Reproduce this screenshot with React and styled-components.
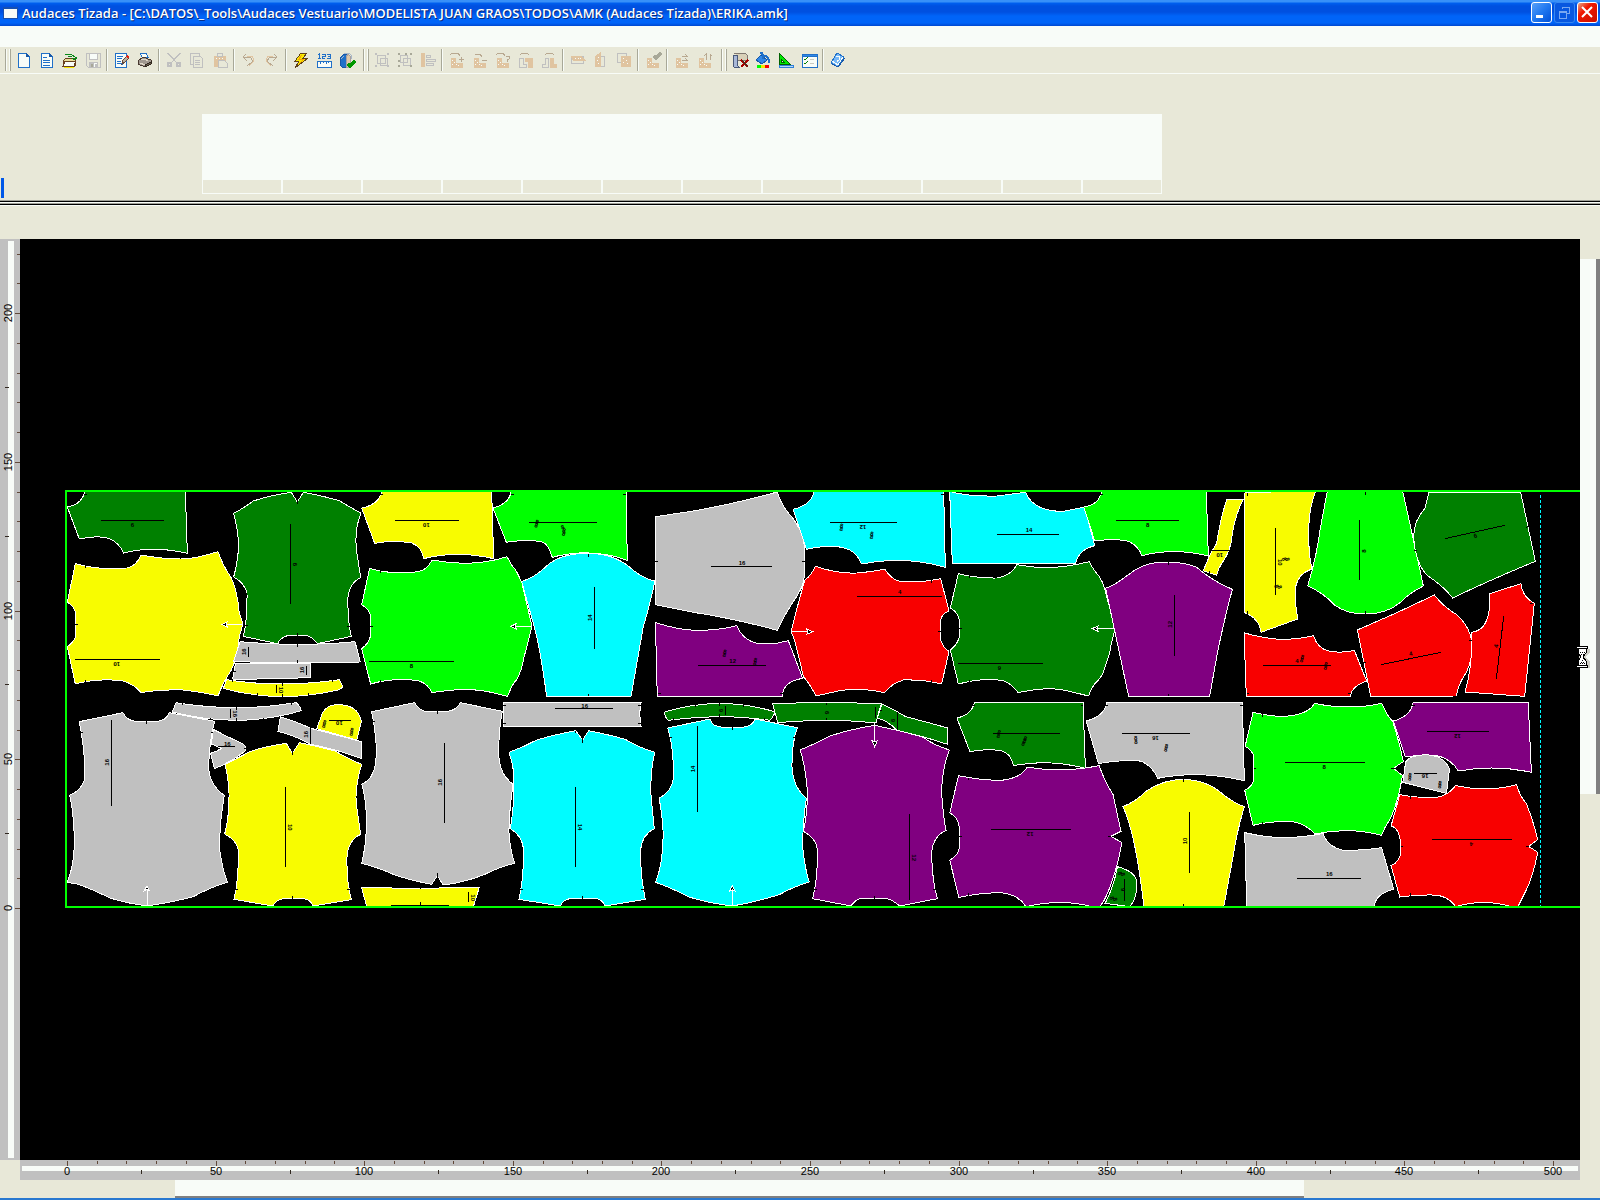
import React from 'react';
import styled, { createGlobalStyle, ThemeProvider } from 'styled-components';

const theme = {
  colors: {
    face: '#e8e8d8',
    paper: '#f8fcf8',
    shade: '#808080',
    ruler: '#c0c0c0',
    table: '#000',
    border: '#00ff00',
    accent: '#0058e8'
  }
};

const Y = '#f8fc00';
const DG = '#008000';
const LG = '#00ff00';
const GR = '#c0c0c0';
const CY = '#00fcff';
const PU = '#800080';
const RE = '#f80000';

const BLUE = '#2070c8';
const OFF = '#c0c0c0';
const TAN = '#e0c4a0';
const TANDARK = '#b8a890';
const WHITE = '#f8fcf8';

// every icon is a list of [path, fill, stroke, stroke width] on a 16 x 16 grid
const LSHAPE = 'M2 6h4v5h7v4H2z';
const DOTS = 'M3 8.500h1M5 10.500h1M3 12.500h1M7 12.500h1M9 13.500h1';
const icons = {
  new: [['M2 1h8l3 3v11H2z', WHITE, BLUE], ['M10 1v3h3', '#1858a8', '#1858a8']],
  model: [
    ['M2 1h8l3 3v11H2z', WHITE, BLUE],
    ['M10 1v3h3', '#1858a8', '#1858a8'],
    ['M4 5h4M4 8h7M4 10h7M4 13h7', 'none', BLUE]
  ],
  open: [
    ['M1 14V9l3-3h9l1 2-1 6z', '#e8dc98', '#684020'],
    ['M3 9h11l-2 5H1z', WHITE, '#684020'],
    ['M2 15h10', 'none', '#f8e800'],
    ['M3 2h6l4 3v3M10 6l3 2 2-3M6 4h4', 'none', '#088818']
  ],
  save: [
    ['M1 1h14v14H3l-2-2z', 'none', OFF],
    ['M4 1h8v6H4zM4 10h8v5H4z', WHITE, OFF],
    ['M5 11h3v4H5zM10 12h1v2h-1z', '#a8a898', OFF]
  ],
  edit: [
    ['M1 1h11v14H1z', WHITE, BLUE],
    ['M3 4h6M3 6h3l2 1M3 9h4M3 12l4-1 2 2', 'none', BLUE],
    ['M8 12l1-4 4-4 2 2-4 4z', '#b8b0a0', '#684838'],
    ['M13 4l2 2', 'none', '#e82010', 2]
  ],
  print: [
    ['M3 1h6l2 4H5z', WHITE, BLUE],
    ['M1 9l5-4 8 3v4l-6 3-7-3z', '#a09890', '#483830'],
    ['M4 8l4-1 3 2M3 11l5 2 4-2', 'none', '#e0d8c8'],
    ['M8 13l6-3v2l-6 3z', '#685848', '#302820']
  ],
  cut: [
    ['M1 1l10 10M15 1L5 11M2 1l8 9M14 1L6 10', 'none', OFF],
    ['M2 11h3v3H2zM11 11h3v3h-3z', 'none', OFF, 2]
  ],
  copy: [['M1 1h9v11H1z', 'none', OFF], ['M4 4h7l2 2v9H4z', '#e8e8d8', OFF], ['M6 8h5M6 10h5M6 12h5', 'none', OFF]],
  paste: [
    ['M2 4h11v10H2z', TAN, TAN],
    ['M5 1h5v3H5z', '#e8e8d8', OFF],
    ['M6 8h6l3 3v4H6z', '#e8e8d8', OFF],
    ['M4 6h1M7 6h1M10 6h1', 'none', WHITE]
  ],
  undo: [['M5 2L2 5l4 4M2 5h6q4 1 3 5l-5 4', 'none', TANDARK], ['M6 4h3q5 1 3 6l-4 4', 'none', TAN]],
  redo: [['M10 2l3 3-4 4M13 5H7q-4 1-3 5l5 4', 'none', TANDARK], ['M9 4H6q-5 1-3 6l4 4', 'none', TAN]],
  flash: [['M8 1h6l-4 5h5L2 16l4-7H2z', '#f8e800', '#604018'], ['M9 3L6 7h5l-5 5', 'none', '#f8a000']],
  measure: [
    ['M1 9h14v6H1z', WHITE, BLUE],
    ['M4 9v3M7 9v2M10 9v3M12 9v2', 'none', BLUE],
    ['M3 1v5M2 2h1M2 6h3M6 2h3v2H6v2h3M11 2h3v4h-3M12 4h2', 'none', BLUE]
  ],
  check: [
    ['M1 6l4-4h3v13H3l-2-2z', BLUE, '#1858a8'],
    ['M7 5l2-3 2 2v11H7z', '#e0c8a8', '#a8a0a0'],
    ['M2 7l3-3M5 1h5l2 2v4', 'none', '#a8b8c8'],
    ['M9 12l2 2 5-5', 'none', '#009800', 3]
  ],
  group: [
    ['M3 3h8v8H3zM6 6h7v7H6z', 'none', OFF],
    ['M1 1h2v2H1zM13 1h2v2h-2zM1 13h2v2H1zM13 13h2v2h-2z', OFF, 'none']
  ],
  ungroup: [
    ['M3 3h7v7H3zM6 6h7v7H6z', 'none', OFF],
    ['M1 1h2v2H1zM8 1h2v2H8zM13 1h2v2h-2zM1 13h2v2H1zM13 13h2v2h-2zM1 8h2v2H1z', '#a8a898', 'none']
  ],
  align: [['M1 1h4v14H1z', TAN, 'none'], ['M6 3h4v2H6zM6 7h9v2H6zM6 11h7v2H6z', 'none', OFF]],
  addPiece: [['M1 3l2-2h6l2 3M10 7h5M12 5v5', 'none', TANDARK], [LSHAPE, TAN, TAN], [DOTS, 'none', WHITE]],
  subPiece: [['M3 2h5l2 3M10 8h5', 'none', TANDARK], [LSHAPE, TAN, TAN], [DOTS, 'none', WHITE]],
  askPiece: [['M1 3l2-2h5l2 3M11 4h3v3l-2 1v2', 'none', TANDARK], [LSHAPE, TAN, TAN], [DOTS, 'none', WHITE]],
  flipLeft: [['M2 3l2-2h5l2 2', 'none', TANDARK], ['M1 6h4v6h3v3H1z', 'none', OFF], ['M7 6h7v9h-4V9H7z', TAN, TAN]],
  flipRight: [['M4 3l2-2h5l2 2', 'none', TANDARK], ['M4 6h3v9H1v-3h3z', 'none', OFF], ['M9 6h3v6h3v3H9z', TAN, TAN]],
  mirrorH: [['M1 4h12v7H1z', 'none', OFF], ['M1 4h10l4 4H3z', TAN, TAN], ['M5 6.500h1M8 6.500h1M10 6.500h1', 'none', WHITE]],
  mirrorV: [['M6 4h5v10H6z', 'none', OFF], ['M2 5l5-4v13H2z', TAN, TAN], ['M5 5.500h1M4 8.500h1M5 11.500h1', 'none', WHITE]],
  stack: [['M1 1h9v9H1z', 'none', OFF], ['M5 4h9v10H5z', TAN, TAN], ['M7 6.500h1M10 8.500h1M7 10.500h1M11 11.500h1', 'none', WHITE]],
  accept: [[LSHAPE, TAN, TAN], [DOTS, 'none', WHITE], ['M9 4l2 2 5-5', 'none', '#a8a898', 3]],
  moveH: [[LSHAPE, TAN, TAN], [DOTS, 'none', WHITE], ['M8 4h5l-2-2M8 8h5l-2-2', 'none', TANDARK]],
  moveV: [[LSHAPE, TAN, TAN], [DOTS, 'none', WHITE], ['M9 8V2L7 4M13 8V2l2 2', 'none', TANDARK]],
  discard: [
    ['M2 1h11l2 2v5H5V3', '#d8d0b8', '#807870'],
    ['M1 3h4v10l2 2H2l-1-2z', '#a8b8d8', '#485878'],
    ['M9 8l7 7M16 8l-7 7', 'none', '#a80000', 2],
    ['M10 8l6 7', 'none', '#483020']
  ],
  paint: [
    ['M1 8l5-5 6 5-5 4z', '#3088e8', '#1858a8'],
    ['M5 1q3-2 3 6M9 4q5 0 5 7', 'none', BLUE, 2],
    ['M2 13h4v3H2z', LG, 'none'],
    ['M6 13h4v3H6z', '#f8e800', 'none'],
    ['M10 13h4v3h-4z', RE, 'none']
  ],
  square: [
    ['M1 1l11 11H1z', '#00e800', '#006000'],
    ['M3 7l3 3H3z', '#e8e8d8', '#006000'],
    ['M1 13h14v2H1z', '#b8d8f8', '#3080d8']
  ],
  options: [
    ['M1 2h15v13H1z', WHITE, BLUE],
    ['M1 2h15v2H1z', '#3088e8', BLUE],
    ['M3 7l1 1 3-3M3 11l1 1 3-3', 'none', '#008000'],
    ['M9 7h4M9 11h4', 'none', '#c8c8c0']
  ],
  help: [
    ['M7 1l7 4-6 10-7-4z', '#78b8f8', BLUE],
    ['M2 9l6 4 5-8', 'none', WHITE],
    ['M6 4l4 1-1 3H7v2', 'none', WHITE],
    ['M2 12l6 3 7-9', 'none', '#1858a8']
  ]
};

// [icon, label, disabled]; '|' is a separator and '||' a toolbar grip
const toolbar = [
  '||',
  ['new', 'Nuevo'],
  ['model', 'Nuevo modelo'],
  ['open', 'Abrir'],
  ['save', 'Guardar', true],
  '|',
  ['edit', 'Propiedades'],
  ['print', 'Imprimir'],
  '|',
  ['cut', 'Cortar', true],
  ['copy', 'Copiar', true],
  ['paste', 'Pegar', true],
  '|',
  ['undo', 'Deshacer', true],
  ['redo', 'Rehacer', true],
  '|',
  ['flash', 'Encaje'],
  ['measure', 'Medidas'],
  ['check', 'Verificar'],
  '||',
  ['group', 'Agrupar', true],
  ['ungroup', 'Desagrupar', true],
  ['align', 'Alinear', true],
  '|',
  ['addPiece', 'Agregar pieza', true],
  ['subPiece', 'Quitar pieza', true],
  ['askPiece', 'Consultar pieza', true],
  ['flipLeft', 'Voltear a la izquierda', true],
  ['flipRight', 'Voltear a la derecha', true],
  '|',
  ['mirrorH', 'Espejo horizontal', true],
  ['mirrorV', 'Espejo vertical', true],
  ['stack', 'Apilar', true],
  '|',
  ['accept', 'Aceptar', true],
  '|',
  ['moveH', 'Mover horizontal', true],
  ['moveV', 'Mover vertical', true],
  '||',
  ['discard', 'Retirar tela'],
  ['paint', 'Colores'],
  ['square', 'Escuadra'],
  ['options', 'Opciones'],
  '|',
  ['help', 'Ayuda']
];

/*
 * Marker pieces, grouped by zone of the table. A zone has its own origin and
 * unit; pieces are [fill, outline], labels are [x, y, size, rotation].
 */
const zones = [
  {
    x: 50, y: 480, sx: 1 / 3,
    pieces: [
      [DG, 'M104 33Q98 72 52 81L88 177Q140 165 175 175Q205 185 221 219Q310 196 412 220L406 33Z'],
      [Y, 'M76 251L52 366Q74 380 77 400L77 470Q70 487 52 500L76 612Q140 594 215 602Q250 610 273 638Q330 628 400 630Q460 637 504 648Q520 605 543 572Q562 535 568 470L579 432L568 400Q562 330 543 292Q520 260 504 215Q430 238 390 237Q330 236 273 225Q260 258 230 264Q150 272 76 251Z'],
      [DG, 'M551 100Q585 82 610 63Q660 46 724 37L742 66L760 37Q830 50 870 63Q900 82 933 99Q912 150 920 215L932 292Q898 310 894 350Q892 420 904 469L802 491Q785 467 762 466L720 466Q695 468 682 491L580 469Q592 420 591 340Q585 310 551 291Q565 240 566 190Q562 140 551 100Z'],
      [GR, 'M570 485Q660 493 742 493Q840 493 915 485L931 546Q840 547 742 548Q640 547 550 545Z'],
      [GR, 'M556 552Q680 552 781 549L781 593Q660 597 548 598Z'],
      [Y, 'M530 599Q610 612 697 612Q790 611 868 599L878 620Q872 627 868 629Q780 650 697 650Q600 648 520 625Z']
    ],
    lines: 'M153 121H341M75 538H329M721 132V371M595 502V530M769 558V584M679 615V640M103 43H112M75 433H84M106 259V265M106 601V608M742 60V72M742 458V470M742 492V501M742 540V549M585 437H593M892 438H900M548 574H558M697 608V618M622 640V648M697 642V650M775 640V648M548 598V605M848 598V605',
    arrows: 'M579 433H530M516 433L532 425L528 433L532 441Z',
    labels: [[247, 135, '6', 0], [200, 552, '10', 180], [735, 253, '6', 90], [582, 515, '16', -90], [757, 570, '16', -90], [693, 630, '10', 90]]
  },
  {
    x: 350, y: 480, sx: 1 / 3,
    pieces: [
      [Y, 'M96 33Q87 74 35 84L74 190Q130 179 185 189Q215 200 221 236Q320 210 431 236L425 33Z'],
      [LG, 'M484 33Q478 72 429 84L469 187Q540 176 580 187Q596 196 607 232Q640 222 700 218Q780 220 832 241L828 33Z'],
      [LG, 'M59 265L35 374Q56 386 61 405L61 470Q56 490 35 506L62 612Q130 592 205 602Q235 612 246 638Q340 622 410 634L473 649Q485 615 500 599Q516 570 520 540L546 439Q530 370 516 310Q500 270 488 260L471 230Q410 250 340 250Q290 248 246 240Q232 270 205 275Q130 286 59 265Z'],
      [CY, 'M515 305Q555 290 580 267Q620 225 690 221L735 221Q800 225 850 271Q885 298 915 303Q898 380 880 440L843 649L590 649Q570 500 550 430Z']
    ],
    lines: 'M135 121H326M57 544H311M537 127H741M733 321V506M90 43H100M482 43H491M820 43H829M60 439H69M92 270V278M92 600V608M715 221V231M715 641V649',
    arrows: 'M546 439H497M482 439L499 431L495 439L499 447Z',
    labels: [[229, 135, '10', 180], [184, 558, '8', 0], [561, 126, '8', 20], [559, 136, '8', 20], [638, 142, '8', -20], [642, 151, '8', 20], [641, 161, '8', 20], [720, 413, '14', -90]]
  },
  {
    x: 650, y: 480, sx: 1 / 3,
    pieces: [
      [GR, 'M17 110L130 93Q250 72 382 36Q395 80 425 110Q463 160 463 200L463 290Q460 325 425 372Q400 410 382 451Q250 415 130 397L17 374Z'],
      [PU, 'M17 428Q90 452 150 451Q210 450 261 437Q275 478 320 490L380 490L415 482L458 595Q398 605 397 649L22 649Q18 540 17 428Z'],
      [CY, 'M493 33Q485 75 429 88L469 208Q540 193 580 203Q620 212 634 252Q760 226 886 262L881 33Z'],
      [CY, 'M899 33L905 36Q960 50 1040 48L1127 37Q1150 95 1240 94L1304 81L1334 197Q1285 210 1277 250L907 250Z'],
      [RE, 'M496 258Q560 282 620 279Q670 275 704 267Q725 300 750 304Q800 310 872 296L897 392Q873 405 872 420L872 480Q880 505 897 514L875 612Q820 598 760 600Q725 610 704 638Q630 622 570 632L498 648Q480 612 460 590Q440 500 430 470L423 455L432 420Q455 330 465 300Q485 285 496 258Z'],
      [DG, 'M925 281L901 384Q925 398 928 420L928 470Q922 495 901 510L925 612Q1000 592 1060 602Q1090 615 1104 638Q1200 618 1250 632L1316 648Q1325 620 1340 605Q1358 590 1365 560Q1380 520 1382 500L1395 446Q1385 400 1370 350Q1360 300 1340 280Q1325 262 1318 245Q1200 275 1101 254Q1080 290 1040 294Q980 295 925 281Z']
    ],
    lines: 'M183 259H365M144 556H347M540 127H741M1041 163H1228M621 349H875M925 550H1179M16 244H25M456 244H465M24 640H32M390 640H398M874 43H882M864 454H873M928 445H937M844 300V308M844 600V608M958 286V294M958 600V608',
    arrows: 'M423 455H472M488 455L470 447L474 455L470 463ZM1395 446H1342M1326 446L1344 438L1340 446L1344 454Z',
    labels: [[276, 250, '16', 0], [248, 543, '12', 0], [225, 515, '8', 15], [223, 525, '8', 15], [316, 540, '8', 15], [315, 550, '8', 15], [639, 141, '12', 180], [575, 137, '8', 15], [574, 147, '8', 15], [666, 161, '8', 15], [665, 171, '8', 15], [1137, 150, '14', 0], [749, 337, '4', 0], [1048, 563, '6', 180]]
  },
  {
    x: 1090, y: 480, sx: 1 / 3,
    pieces: [
      [LG, 'M35 33Q28 75 -19 81L14 182Q90 175 118 185Q145 198 156 227Q250 202 355 228L349 33Z'],
      [PU, 'M47 325Q80 312 110 288Q160 246 215 247Q280 244 320 262Q370 305 427 328Q400 430 382 520L359 649L116 649Z'],
      [Y, 'M411 58L460 58Q432 110 423 190Q412 230 395 250Q385 265 380 286L340 272Q360 220 380 190Q392 110 411 58Z'],
      [Y, 'M464 40L470 33L676 36Q655 90 656 160Q656 230 666 267Q625 280 617 320Q614 370 623 417Q560 440 513 457Q508 415 464 398Z'],
      [LG, 'M712 33L938 33Q975 200 1000 318Q960 338 930 368Q890 402 826 402Q770 402 735 376Q700 338 653 318Q680 230 690 150Z'],
      [DG, 'M1017 37L1292 37L1336 244Q1200 300 1088 354Q1060 318 1010 285Q975 245 971 170Q972 120 1005 85Z'],
      [RE, 'M464 459Q540 480 590 478Q640 475 671 467Q680 505 720 514Q760 520 793 511L830 603Q785 618 781 649L469 649Q464 550 464 459Z'],
      [RE, 'M802 450Q920 400 1033 345Q1060 380 1100 404Q1145 445 1147 500Q1145 560 1115 600Q1102 625 1099 648L842 649Z'],
      [RE, 'M1199 341L1293 311Q1297 350 1333 370L1304 649L1125 636Q1148 560 1145 457Q1205 450 1199 341Z']
    ],
    lines: 'M78 121H266M253 346V527M362 211H416M556 144V346M808 121V301M1065 176L1245 136M520 556H722M873 554L1053 517M1241 409L1219 597M31 43H39M236 247V255M236 641V649M358 272V280M473 40V48M473 393V401M826 36V44M826 393V401M972 211H981M1308 142L1316 138M1138 480H1146M818 548H828M470 640H478M775 640H783M1321 371H1329',
    arrows: 'M464 38H544M1030 38H1218',
    labels: [[173, 135, '8', 0], [240, 433, '12', -90], [389, 224, '10', 180], [570, 247, '10', 90], [582, 237, '8', 75], [592, 238, '8', 75], [559, 319, '8', 75], [569, 321, '8', 75], [822, 213, '8', -90], [1156, 168, '6', -15], [621, 542, '4', 0], [635, 541, '8', 15], [637, 531, '8', 15], [708, 553, '8', 15], [706, 563, '8', 15], [962, 521, '4', -12], [1218, 498, '4', -80]]
  },
  {
    x: 50, y: 690, sx: 1 / 3,
    pieces: [
      [GR, 'M490 118Q530 140 580 162Q592 175 585 184Q540 218 493 236L482 190Q500 185 515 175L484 162Z'],
      [GR, 'M378 38Q470 53 559 53Q650 53 738 38Q752 50 754 62Q660 90 560 91Q460 90 367 66Z'],
      [GR, 'M88 95L219 68Q232 94 260 94L320 94Q350 92 358 68L494 94Q478 150 476 230Q478 285 523 316Q508 400 509 480Q518 540 532 577Q480 592 430 620Q370 636 292 648Q230 640 180 624Q120 595 85 583L52 577Q75 520 73 440Q70 360 59 316Q95 300 103 270Q108 200 88 95Z'],
      [Y, 'M525 224Q570 200 600 185Q640 170 709 160L727 190L748 158Q800 168 855 183Q890 205 935 223Q912 300 920 350L932 433Q895 450 891 500Q889 570 904 629L790 648Q780 627 760 626L700 626Q680 628 668 648L552 628Q566 570 565 480Q560 450 524 432Q538 380 537 310Q535 260 525 224Z'],
      [Y, 'M817 70Q830 45 858 44Q925 42 934 95L920 150L800 116Z'],
      [GR, 'M691 80Q740 95 783 115Q860 135 935 155L935 206Q860 178 783 163Q730 135 684 124Z'],
      [GR, 'M965 65L1094 38Q1108 64 1135 65L1190 65Q1222 60 1231 38L1357 64Q1347 110 1346 190Q1348 255 1389 282Q1376 380 1377 430Q1382 490 1394 520Q1350 530 1300 555Q1240 578 1180 585L1162 557L1145 583Q1050 565 1000 540Q960 526 935 520Q952 450 949 370Q945 310 935 282Q985 265 978 160Q975 110 965 65Z'],
      [Y, 'M935 593L1110 595L1288 592L1270 650L950 650Z']
    ],
    lines: 'M184 90V348M541 58V83M505 170H554M706 292V530M837 91H903M781 112V163M1183 159V398M1255 607V635M1022 646H1198M289 93V102M92 126H100M483 126H490M398 38V45M725 38V45M559 50V60M559 84V92M480 83V91M640 83V91M727 184V194M727 618V628M554 597H563M892 597H900M582 175H589M1162 64V72M966 93H974M1162 548V560M1111 588V597M1111 636V646',
    arrows: 'M292 648V600M291 587L283 603L291 599L299 603Z',
    labels: [[172, 217, '16', -90], [554, 71, '16', 90], [532, 163, '16', 0], [720, 412, '10', 90], [868, 98, '10', 180], [824, 97, '8', 15], [822, 107, '8', 15], [906, 120, '8', 15], [904, 131, '8', 15], [768, 133, '16', -90], [1170, 277, '16', -90], [1269, 623, '10', 90]]
  },
  {
    x: 490, y: 690, sx: 1 / 3,
    pieces: [
      [GR, 'M40 38H453L449 70L453 109H40Z'],
      [CY, 'M57 187Q100 172 140 150Q190 135 257 122L278 150L296 122Q360 135 406 148Q440 170 495 187Q478 250 484 330L493 416Q455 435 452 480Q451 560 466 628L345 648Q335 627 320 626L240 626Q220 628 211 648L87 628Q102 560 100 480Q100 440 61 416Q75 330 71 250Q68 220 57 187Z'],
      [DG, 'M524 66Q600 42 690 40Q780 42 856 66Q850 80 840 91Q760 80 690 80Q600 82 536 91Q525 85 524 66Z'],
      [DG, 'M848 41Q930 38 1010 38Q1090 38 1174 41Q1165 70 1158 99Q1080 91 1010 91Q930 92 863 98Z'],
      [CY, 'M533 114L660 87Q665 110 700 112L755 112Q785 112 795 87L922 113Q905 160 906 230Q908 290 949 325Q938 400 938 470Q945 540 958 576Q910 590 870 613Q800 636 727 648Q660 640 600 622Q540 592 497 577Q522 510 519 420Q515 360 507 325Q545 305 550 265Q552 170 533 114Z'],
      [PU, 'M930 180Q980 160 1020 138Q1080 118 1154 106Q1240 124 1300 142Q1330 165 1378 180Q1355 240 1355 310Q1360 380 1368 421Q1328 440 1325 490Q1326 570 1342 626L1229 648Q1205 628 1190 626H1110Q1095 630 1083 648L968 626Q984 560 982 480Q980 445 940 424Q953 370 952 300Q945 220 930 180Z'],
      [DG, 'M1176 42Q1215 60 1247 80Q1310 96 1373 114V163Q1300 138 1222 121Q1190 90 1162 85Z']
    ],
    lines: 'M195 55H368M256 292V530M622 109V365M706 48V74M1156 50V85M1222 66V120M1258 372V630M40 46H48M445 46H453M40 101H48M445 101H453M278 148V158M278 618V627M90 597H98M454 597H462M617 41V50M689 40V48M689 73V81M760 41V50M550 84V91M824 84V91M1010 38V46M1010 84V91M727 111V120M538 143H546M909 143H917M1154 618V627M972 597H980M1330 597H1338M255 122V130M1170 61H1176',
    arrows: 'M727 648V600M727 587L719 603L727 599L735 603ZM1154 98V155M1154 170L1146 152L1154 156L1162 152Z',
    labels: [[284, 48, '16', 0], [270, 411, '14', 90], [609, 237, '14', -90], [693, 61, '6', -90], [1012, 68, '6', 90], [1209, 91, '6', -90], [1272, 503, '12', 90]]
  },
  {
    x: 930, y: 690, sx: 0.3954,
    pieces: [
      [DG, 'M112 38H387L393 235Q300 206 211 227Q205 190 180 182Q140 175 101 185L68 84Q105 75 112 38Z'],
      [GR, 'M447 38H790L795 272Q680 240 576 265Q560 222 530 213Q480 208 426 221L395 93Q440 80 447 38Z'],
      [PU, 'M1222 38H1513L1521 247Q1430 223 1336 243Q1320 208 1280 196Q1240 193 1202 201L1172 93Q1215 80 1222 38Z'],
      [LG, 'M817 67Q860 80 900 79Q960 72 972 40Q1060 62 1142 40Q1160 85 1170 93Q1190 170 1197 215L1172 235L1195 257Q1185 330 1165 385Q1150 410 1142 436Q1060 410 974 432Q950 402 920 396Q860 392 817 406L796 301Q815 290 819 270V200Q815 180 797 169Z'],
      [RE, 'M1188 314Q1240 325 1280 322Q1310 318 1329 287Q1410 308 1483 284Q1495 325 1508 340Q1525 390 1537 449L1514 469L1537 487Q1525 560 1508 600L1487 650H1470Q1400 625 1329 650Q1310 615 1270 615Q1230 614 1188 621L1166 527Q1190 515 1191 480Q1191 415 1166 408Z'],
      [GR, 'M1203 215Q1215 195 1255 194Q1300 196 1314 237L1306 310L1196 277Z'],
      [GR, 'M796 428Q850 443 900 443Q960 440 994 430Q1005 470 1045 481Q1090 482 1142 473L1173 598Q1128 610 1123 650H801Z'],
      [Y, 'M488 350Q520 335 545 305Q590 268 641 268Q700 270 740 312Q770 340 795 350Q775 430 768 490L743 650H541Q520 430 488 350Z'],
      [PU, 'M72 257Q130 271 180 271Q230 265 246 231Q330 250 428 227Q440 270 463 314L483 424L457 439L485 457Q478 510 468 545Q450 620 430 650H410Q330 625 243 650Q220 608 170 608Q120 610 73 622L50 511Q72 495 74 475V410Q70 380 50 369Z'],
      [DG, 'M474 530Q520 545 523 575Q525 625 505 650L443 640Q465 590 474 530Z']
    ],
    lines: 'M160 130H330M486 130H657M898 217H1099M1257 124H1415M1224 250H1281M1270 448H1472M928 565H1089M656 366V548M154 418H357M491 568V633M107 46H115M382 46H388M442 46H450M784 46H791M641 268V276M641 641V648M74 439H82M450 439H457M98 263V270M98 610V617M819 235H825M1166 235H1173M842 73V80M842 395V402M1191 469H1197M1508 469H1515M1214 319V327M1214 610V618M1218 46H1226',
    arrows: '',
    labels: [[175, 127, '8', 15], [173, 138, '8', 15], [241, 145, '8', 20], [239, 153, '8', 20], [236, 161, '8', 20], [570, 144, '16', 180], [520, 145, '8', 0], [521, 156, '8', 0], [598, 168, '8', 10], [596, 179, '8', 10], [997, 232, '8', 0], [1334, 138, '12', 180], [1252, 258, '16', 180], [1214, 255, '8', 10], [1213, 266, '8', 10], [1290, 279, '8', 10], [1289, 289, '8', 10], [1369, 462, '4', 180], [1010, 552, '16', 0], [645, 453, '10', -90], [253, 433, '12', 180], [487, 599, '6', -90], [480, 550, '8', 75], [488, 553, '8', 75], [460, 624, '8', 75], [468, 628, '8', 75]]
  }
];

const STEP = 2.972;
const UNITS = Array.from({ length: 51 }, (_, i) => i * 10);

function Icon({ name }) {
  return (
    <svg width="16" height="16" viewBox="0 0 16 16" overflow="visible" shapeRendering="crispEdges" aria-hidden="true">
      {icons[name].map(([d, fill, stroke, width = 1], i) => (
        <path key={i} d={d} fill={fill} stroke={stroke} strokeWidth={width} />
      ))}
    </svg>
  );
}

function Zone({ x, y, sx, pieces, lines, arrows, labels }) {
  const outline = { vectorEffect: 'non-scaling-stroke', strokeWidth: 1 };
  return (
    <g>
      <g transform={`translate(${x} ${y}) scale(${sx} ${1 / 3})`} shapeRendering="crispEdges">
        {pieces.map(([fill, d]) => (
          <path key={d} d={d} fill={fill} stroke="#fff" {...outline} />
        ))}
        <path d={lines} fill="none" stroke="#000" {...outline} />
        <path d={arrows} fill="#000" stroke="#fff" {...outline} />
      </g>
      {labels.map(([lx, ly, size, turn], i) => (
        <PieceLabel key={i} transform={`translate(${x + lx * sx} ${y + ly / 3}) rotate(${turn})`} dy="2">
          {size}
        </PieceLabel>
      ))}
    </g>
  );
}

function Marker() {
  return (
    <Drawing role="img" aria-label="Tizada">
      <g transform="translate(-20 -239)">
        {zones.map((zone, i) => (
          <Zone key={i} {...zone} />
        ))}
        <path d="M1540.5 495V906" stroke="#00fcff" strokeDasharray="3 2" shapeRendering="crispEdges" />
        <path d="M66 492V907M65 491H1600M65 907H1600" fill="none" stroke={LG} strokeWidth="2" />
      </g>
    </Drawing>
  );
}

function BottomRuler() {
  return (
    <Drawing height="20">
      <path d="M2 8.500H1558" stroke={WHITE} strokeWidth="5" />
      {UNITS.map(u => {
        const x = Math.round(47 + u * STEP);
        const major = u % 50 === 0;
        return (
          <g key={u}>
            <path d={`M${x}.5 1v${major ? 5 : 3}`} stroke="#604838" />
            {major && (
              <>
                <path d={`M${x + 74}.5 10v4`} stroke="#302820" />
                <RulerText x={x} y="15">{u}</RulerText>
              </>
            )}
          </g>
        );
      })}
    </Drawing>
  );
}

function LeftRuler() {
  return (
    <Drawing width="20">
      <path d="M11 2V919" stroke={WHITE} strokeWidth="6" />
      {UNITS.filter(u => u <= 220).map(u => {
        const y = Math.round(669 - u * 2.975);
        const major = u % 50 === 0;
        return (
          <g key={u}>
            <path d={`M20 ${y}.5h${major ? -5 : -3}`} stroke="#604838" />
            {major && (
              <>
                {u < 200 && <path d={`M5 ${y - 75}.5h4`} stroke="#302820" />}
                <RulerText transform={`translate(12 ${y}) rotate(-90)`}>{u}</RulerText>
              </>
            )}
          </g>
        );
      })}
    </Drawing>
  );
}

function App() {
  return (
    <ThemeProvider theme={theme}>
      <GlobalStyle />
      <Window>
        <TitleBar>
          <WindowIcon />
          <Title>
            Audaces Tizada - [C:\DATOS\_Tools\Audaces Vestuario\MODELISTA JUAN GRAOS\TODOS\AMK (Audaces Tizada)\ERIKA.amk]
          </Title>
          <WindowButton aria-label="Minimizar">
            <svg width="19" height="19"><path d="M4 12h7v3H4z" fill="#fff" /></svg>
          </WindowButton>
          <WindowButton aria-label="Restaurar" disabled>
            <svg width="19" height="19" fill="none" stroke="#78a8f0" shapeRendering="crispEdges">
              <path d="M4 8h7v7H4zM4 9h7M7 6V4h7v6h-2" />
            </svg>
          </WindowButton>
          <WindowButton aria-label="Cerrar" $close>
            <svg width="19" height="19" stroke="#fff" strokeWidth="2"><path d="M4 4l10 10M14 4L4 14" /></svg>
          </WindowButton>
        </TitleBar>
        <MenuBar />
        <Toolbar>
          {toolbar.map((item, i) => {
            if (item === '|') return <Separator key={i} />;
            if (item === '||') return <Grip key={i} />;
            const [name, label, disabled] = item;
            return (
              <ToolButton key={i} aria-label={label} disabled={disabled}>
                <Icon name={name} />
              </ToolButton>
            );
          })}
        </Toolbar>
        <PieceTray>
          <TrayMark />
          <Tray>
            <TrayBody />
            <TrayCells>
              {Array.from({ length: 12 }, (_, i) => (
                <TrayCell key={i} />
              ))}
            </TrayCells>
          </Tray>
        </PieceTray>
        <Splitter />
        <Splitter />
        <Workspace>
          <RulerBox><LeftRuler /></RulerBox>
          <Table><Marker /></Table>
          <SideTrack><SideThumb /></SideTrack>
          <Corner />
          <RulerBox><BottomRuler /></RulerBox>
          <Corner />
        </Workspace>
        <BottomTrack><BottomThumb /></BottomTrack>
        <Hourglass width="16" height="24" viewBox="0 0 16 24" shapeRendering="crispEdges">
          <path d="M3 4h11v3l-4 5 4 5v6H3z" fill="#d0d0c8" />
          <path d="M2 3h8v5l-3 4 3 4v5H2v-5l3-4-3-4z" fill="#fff" stroke="#000" />
          <path d="M0 1h12v3H0zM0 20h12v3H0z" fill="#000" />
          <path d="M1 2.500h10M1 21.500h10" stroke="#fff" />
          <path d="M4 7.500h1m1 0h1m1 0h1M5 9.500h1m1 0h1M6 15.500h1M5 17.500h1m1 0h1M4 18.500h1m1 0h1m1 0h1" stroke="#000" />
        </Hourglass>
      </Window>
    </ThemeProvider>
  );
}

export default App;

const GlobalStyle = createGlobalStyle`
  body {
    margin: 0;
    font-family: 'Liberation Sans', sans-serif;
  }
  button {
    font: inherit;
    padding: 0;
  }
`;

const Window = styled.div`
  position: relative;
  display: flex;
  flex-direction: column;
  box-sizing: border-box;
  min-height: 100vh;
  overflow: hidden;
  background: ${({ theme }) => theme.colors.face};
  border-bottom: 2px solid #2878d0;
`;

const TitleBar = styled.header`
  display: flex;
  align-items: center;
  gap: 2px;
  height: 26px;
  box-sizing: border-box;
  padding: 0 2px 1px 3px;
  background: linear-gradient(#3890f8 0, #3890f8 2px, #0060f0 3px, #0050e0 6px, #0050e0 12px, #0064f8 16px, #0064f8 23px, #0048d0 26px);
`;

const WindowIcon = styled.span`
  width: 13px;
  height: 9px;
  flex: none;
  background: ${({ theme }) => theme.colors.paper};
  border: 1px solid #1850b0;
  border-top-width: 2px;
`;

const Title = styled.h1`
  flex: 1;
  margin: 0 0 0 2px;
  overflow: hidden;
  white-space: nowrap;
  color: #fff;
  font: 600 13px/22px 'Open Sans', sans-serif;
  text-shadow: 1px 1px 0 #082878;
`;

const WindowButton = styled.button`
  display: flex;
  width: 21px;
  height: 21px;
  flex: none;
  overflow: hidden;
  border: 1px solid ${({ disabled }) => (disabled ? '#3888f0' : '#fff')};
  border-radius: 3px;
  background: ${({ $close, disabled }) =>
    $close
      ? 'linear-gradient(135deg, #e8a888, #f01800 35%, #c81000)'
      : disabled
        ? '#0858e0'
        : 'linear-gradient(135deg, #58a0f8, #2078f0 50%, #0050d8)'};
`;

const MenuBar = styled.nav`
  height: 21px;
  background: ${({ theme }) => theme.colors.paper};
`;

const Toolbar = styled.div`
  display: flex;
  align-items: center;
  height: 26px;
  border-bottom: 1px solid ${({ theme }) => theme.colors.paper};
`;

const ToolButton = styled.button`
  display: flex;
  align-items: center;
  justify-content: center;
  width: 23px;
  height: 24px;
  border: 0;
  background: none;
`;

const Separator = styled.span`
  width: 1px;
  height: 22px;
  margin: 0 2px;
  background: #a8a898;
  border-right: 1px solid ${({ theme }) => theme.colors.paper};
`;

const Grip = styled.span`
  box-sizing: border-box;
  width: 6px;
  height: 22px;
  margin: 0 1px 0 5px;
  border: solid #a8a898;
  border-width: 0 1px;
  background: linear-gradient(90deg, #f8fcf8 1px, #e8e8d8 1px, #e8e8d8 3px, #f8fcf8 3px);
`;

const PieceTray = styled.section`
  display: flex;
  align-items: flex-end;
  height: 124px;
  padding-bottom: 2px;
`;

const TrayMark = styled.span`
  width: 3px;
  height: 20px;
  margin: 0 198px 0 1px;
  background: ${({ theme }) => theme.colors.accent};
`;

const Tray = styled.div`
  width: 60%;
  margin-bottom: 4px;
  background: ${({ theme }) => theme.colors.paper};
`;

const TrayBody = styled.div`
  height: 66px;
`;

const TrayCells = styled.div`
  display: grid;
  grid-template-columns: repeat(12, 1fr);
`;

const TrayCell = styled.span`
  height: 13px;
  border: solid ${({ theme }) => theme.colors.paper};
  border-width: 0 1px 1px;
  background: ${({ theme }) => theme.colors.face};
`;

const Splitter = styled.hr`
  box-sizing: border-box;
  width: 100%;
  height: 3px;
  flex: none;
  margin: 0;
  border: solid;
  border-width: 1px 0;
  border-color: #a0a098 transparent ${({ theme }) => theme.colors.paper};
  background: #000;
`;

const Workspace = styled.main`
  display: grid;
  grid-template-columns: 20px 1fr 20px;
  grid-template-rows: 1fr 20px;
  flex: 1;
  margin-top: 33px;
`;

const RulerBox = styled.div`
  position: relative;
  overflow: hidden;
  background: ${({ theme }) => theme.colors.ruler};
`;

const Table = styled(RulerBox)`
  min-height: 680px;
  background: ${({ theme }) => theme.colors.table};
`;

const Drawing = styled.svg`
  position: absolute;
  inset: 0;
  width: 100%;
  height: 100%;
`;

const RulerText = styled.text`
  font: 11px 'Liberation Sans', sans-serif;
  text-anchor: middle;
`;

const PieceLabel = styled.text`
  font: bold 6px 'Liberation Sans', sans-serif;
  text-anchor: middle;
`;

const SideTrack = styled.div`
  padding-top: 20px;
`;

const SideThumb = styled.div`
  box-sizing: border-box;
  height: 59.4%;
  border-right: 4px solid ${({ theme }) => theme.colors.shade};
  background: ${({ theme }) => theme.colors.paper};
`;

const Corner = styled.div`
  background: ${({ theme }) => theme.colors.face};
`;

const BottomTrack = styled.footer`
  padding-left: 175px;
`;

const BottomThumb = styled.div`
  width: 79.2%;
  height: 16px;
  border-bottom: 2px solid ${({ theme }) => theme.colors.shade};
  background: ${({ theme }) => theme.colors.paper};
`;

// the busy pointer floats over the right edge of the table
const Hourglass = styled.svg`
  position: absolute;
  right: 8px;
  top: 645px;
`;
